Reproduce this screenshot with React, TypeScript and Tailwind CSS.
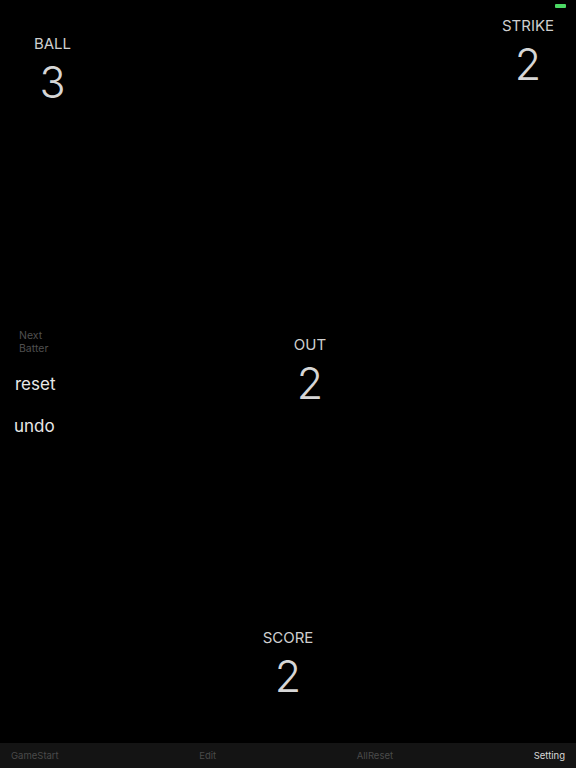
export default function App() {
  const font = { fontFamily: 'Inter, "Noto Sans", sans-serif' };
  return (
    <div className="w-[576px] h-[768px] bg-black flex flex-col overflow-hidden relative" style={font}>
      <div className="absolute top-[4px] left-[555px] w-[11px] h-[4px] bg-[#4cd964] rounded-[1px]" />
      <div className="h-[743px] flex flex-col">
        <div className="flex items-start justify-between">
          <div className="w-[105px] mt-[35px] flex flex-col items-center text-[#cfcfcf]">
            <div className="text-[15px] leading-[18px]">BALL</div>
            <div className="mt-[8px] text-[43px] leading-[43px] font-light text-[#d6d6d6]">3</div>
          </div>
          <div className="w-[96px] mt-[17px] flex flex-col items-center text-[#cfcfcf]">
            <div className="text-[15px] leading-[18px]">STRIKE</div>
            <div className="mt-[8px] text-[43px] leading-[43px] font-light text-[#d6d6d6]">2</div>
          </div>
        </div>
        <div className="mt-[225px] flex items-start">
          <div className="w-[100px] flex flex-col">
            <div className="pl-[19px] text-[10.5px] leading-[13px] text-[#4f4f4f]">
              Next<br />Batter
            </div>
            <div className="pl-[15px] mt-[19px] text-[17px] leading-[20px] text-[#e8e8e8]">reset</div>
            <div className="pl-[14px] mt-[22px] text-[17px] leading-[20px] text-[#e8e8e8]">undo</div>
          </div>
          <div className="ml-[180px] mt-[7px] w-[60px] flex flex-col items-center text-[#cfcfcf]">
            <div className="text-[15px] leading-[18px]">OUT</div>
            <div className="mt-[8px] text-[43px] leading-[43px] font-light text-[#d6d6d6]">2</div>
          </div>
        </div>
        <div className="mt-[193px] flex flex-col items-center text-[#cfcfcf]">
          <div className="text-[15px] leading-[18px]">SCORE</div>
          <div className="mt-[8px] text-[43px] leading-[43px] font-light text-[#d6d6d6]">2</div>
        </div>
      </div>
      <div className="h-[25px] bg-[#141414] flex items-center justify-between pl-[11px] pr-[11px] text-[9.5px] leading-[12px]">
        <span className="text-[#4a4a4a]">GameStart</span>
        <span className="text-[#4a4a4a]">Edit</span>
        <span className="text-[#4a4a4a]">AllReset</span>
        <span className="text-[#d8d8d8]">Setting</span>
      </div>
    </div>
  );
}
